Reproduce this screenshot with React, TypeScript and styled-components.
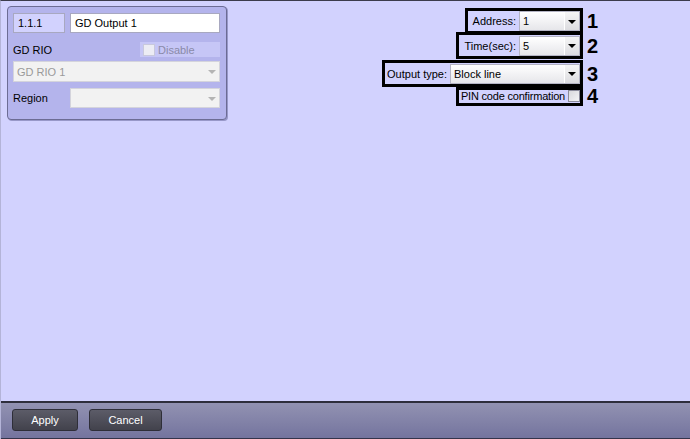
import React from "react";
import styled, { createGlobalStyle } from "styled-components";

const GlobalStyle = createGlobalStyle`
  html, body {
    margin: 0;
    padding: 0;
    background: #d2d2fe;
  }
  body {
    font-family: "Liberation Sans", Arial, sans-serif;
    font-size: 11px;
    color: #000;
  }
`;

const Window = styled.div`
  width: 690px;
  height: 439px;
  box-sizing: border-box;
  display: flex;
  flex-direction: column;
  background: #d2d2fe;
  border-top: 1px solid #3c3c4c;
  border-left: 1px solid #b4b4d8;
  overflow: hidden;
`;

const Content = styled.div`
  flex: 1;
  display: flex;
  justify-content: space-between;
  align-items: flex-start;
  padding: 5px 0 0 6px;
`;

const Panel = styled.div`
  width: 220px;
  height: 114px;
  box-sizing: border-box;
  border: 1px solid #6c6c94;
  border-radius: 4px;
  background: #b4b4ec;
  padding: 6px 6px 0 5px;
  display: flex;
  flex-direction: column;
  box-shadow: 1px 1px 0 #9898c8;
`;

const Row = styled.div<{ $mt?: number; $h: number }>`
  display: flex;
  align-items: center;
  justify-content: space-between;
  margin-top: ${(p) => p.$mt ?? 0}px;
  height: ${(p) => p.$h}px;
`;

const TextField = styled.div<{ $w: number; $bg: string }>`
  width: ${(p) => p.$w}px;
  height: 20px;
  box-sizing: border-box;
  border: 1px solid #a8a8c0;
  background: ${(p) => p.$bg};
  padding: 0 4px;
  display: flex;
  align-items: center;
`;

const Label = styled.span<{ $tight?: boolean }>`
  white-space: nowrap;
  letter-spacing: ${(p) => (p.$tight ? "-0.2px" : "normal")};
`;

const DisableStrip = styled.div`
  width: 80px;
  height: 15px;
  background: #c6c6f6;
  display: flex;
  align-items: center;
  gap: 3px;
  padding-left: 3px;
  box-sizing: border-box;
  color: #8a8aa8;
`;

const Check = styled.div<{ $disabled?: boolean }>`
  width: 12px;
  height: 12px;
  box-sizing: border-box;
  border: 1px solid ${(p) => (p.$disabled ? "#c8c8dc" : "#8c8c9c")};
  background: ${(p) =>
    p.$disabled ? "#ececf4" : "linear-gradient(135deg, #d8d8dc, #f4f4f6)"};
  flex-shrink: 0;
`;

const Combo = styled.div<{ $w: number; $h?: number; $disabled?: boolean }>`
  width: ${(p) => p.$w}px;
  height: ${(p) => p.$h ?? 20}px;
  box-sizing: border-box;
  border: 1px solid ${(p) => (p.$disabled ? "#d4d4dc" : "#b4b4c4")};
  background: ${(p) =>
    p.$disabled ? "#f2f2f2" : "linear-gradient(#ffffff, #e6e6ea)"};
  color: ${(p) => (p.$disabled ? "#9a9a9a" : "#000")};
  display: flex;
  align-items: center;
  padding-left: 3px;
  flex-shrink: 0;
`;

const ComboText = styled.span`
  flex: 1;
  white-space: nowrap;
`;

const ArrowButton = styled.div<{ $disabled?: boolean }>`
  width: 15px;
  height: 100%;
  box-sizing: border-box;
  display: flex;
  align-items: center;
  justify-content: center;
  border-left: 1px solid ${(p) => (p.$disabled ? "transparent" : "#ffffff")};
  background: ${(p) =>
    p.$disabled ? "transparent" : "linear-gradient(#f6f6f6, #dcdce0)"};
  &::after {
    content: "";
    width: 0;
    height: 0;
    border-left: 4px solid transparent;
    border-right: 4px solid transparent;
    border-top: 4px solid ${(p) => (p.$disabled ? "#b4b4b4" : "#000")};
    margin-top: 1px;
  }
`;

const Form = styled.div`
  display: flex;
  flex-direction: column;
  align-items: flex-end;
  margin-right: 92px;
  padding-top: 2px;
`;

const FieldRow = styled.div<{ $mt?: number }>`
  display: flex;
  align-items: center;
  gap: 4px;
  margin-top: ${(p) => p.$mt ?? 0}px;
`;

const Marked = styled.div<{ $w: number; $h: number }>`
  width: ${(p) => p.$w}px;
  height: ${(p) => p.$h}px;
  box-sizing: border-box;
  border: 3px solid #000;
  display: flex;
  align-items: center;
  justify-content: flex-end;
  gap: 3px;
  padding: 0;
  position: relative;
  z-index: 1;
`;

const Num = styled.span`
  width: 11px;
  font-size: 20px;
  font-weight: bold;
  line-height: 1;
`;

const Footer = styled.div`
  height: 38px;
  box-sizing: border-box;
  border-top: 2px solid #2e2e3c;
  border-bottom: 1px solid #34344a;
  background: linear-gradient(#9292b2, #74749e);
  display: flex;
  align-items: flex-start;
  gap: 11px;
  padding: 6px 0 0 11px;
`;

const Button = styled.button<{ $w: number }>`
  width: ${(p) => p.$w}px;
  height: 22px;
  border: 1px solid #2e2e38;
  border-radius: 3px;
  background: linear-gradient(#5c5c68, #42424c);
  color: #fff;
  font-family: "Liberation Sans", Arial, sans-serif;
  font-size: 11px;
  padding: 0;
`;

type ComboProps = { w: number; h?: number; value?: string; disabled?: boolean };

const ComboBox = ({ w, h, value, disabled }: ComboProps) => (
  <Combo $w={w} $h={h} $disabled={disabled}>
    <ComboText>{value}</ComboText>
    <ArrowButton $disabled={disabled} />
  </Combo>
);

export default function App() {
  return (
    <>
      <GlobalStyle />
      <Window>
        <Content>
          <Panel>
            <Row $h={20}>
              <TextField $w={52} $bg="#d2d2fe">1.1.1</TextField>
              <TextField $w={150} $bg="#ffffff">GD Output 1</TextField>
            </Row>
            <Row $h={15} $mt={9}>
              <Label>GD RIO</Label>
              <DisableStrip>
                <Check $disabled />
                <Label>Disable</Label>
              </DisableStrip>
            </Row>
            <Row $h={21} $mt={4}>
              <ComboBox w={207} h={21} value="GD RIO 1" disabled />
            </Row>
            <Row $h={20} $mt={6}>
              <Label>Region</Label>
              <ComboBox w={150} disabled />
            </Row>
          </Panel>

          <Form>
            <FieldRow>
              <Marked $w={118} $h={26}>
                <Label>Address:</Label>
                <ComboBox w={61} value="1" />
              </Marked>
              <Num>1</Num>
            </FieldRow>
            <FieldRow $mt={-2}>
              <Marked $w={127} $h={27}>
                <Label>Time(sec):</Label>
                <ComboBox w={61} value="5" />
              </Marked>
              <Num>2</Num>
            </FieldRow>
            <FieldRow $mt={1}>
              <Marked $w={201} $h={27}>
                <Label>Output type:</Label>
                <ComboBox w={130} value="Block line" />
              </Marked>
              <Num>3</Num>
            </FieldRow>
            <FieldRow $mt={-1}>
              <Marked $w={127} $h={19}>
                <Label $tight>PIN code confirmation</Label>
                <Check />
              </Marked>
              <Num>4</Num>
            </FieldRow>
          </Form>
        </Content>

        <Footer>
          <Button $w={66}>Apply</Button>
          <Button $w={73}>Cancel</Button>
        </Footer>
      </Window>
    </>
  );
}
